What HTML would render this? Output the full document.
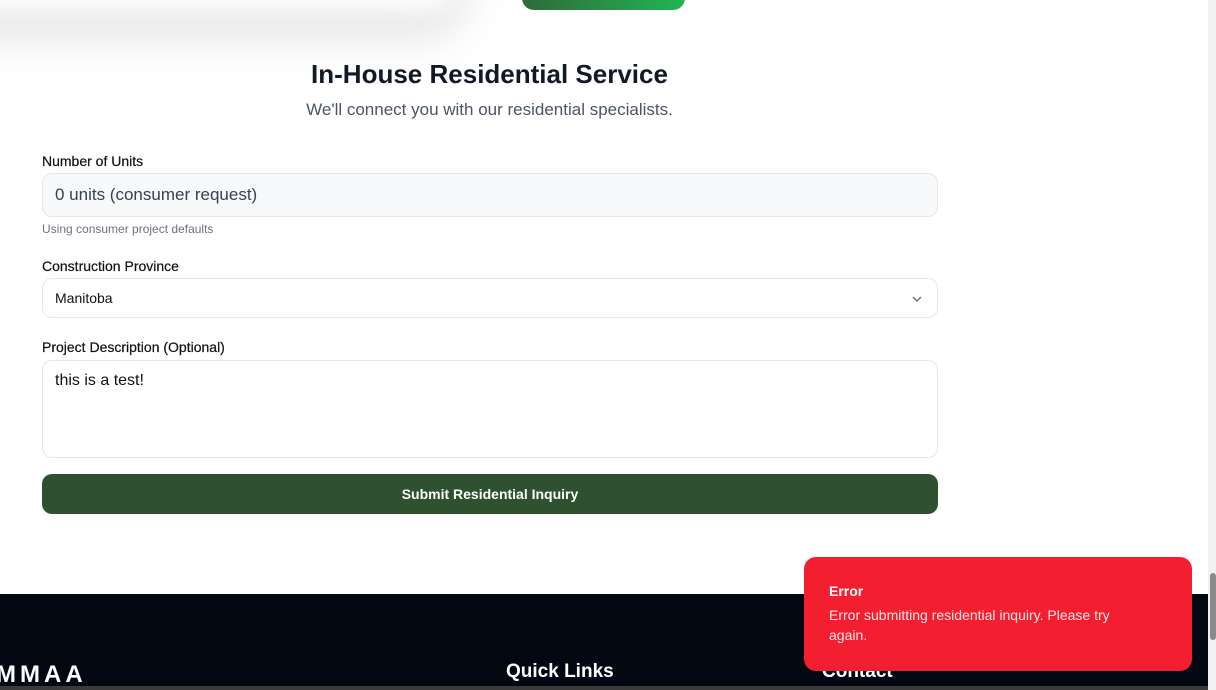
<!DOCTYPE html>
<html><head><style>
*{box-sizing:border-box;margin:0;padding:0}
body{width:1216px;height:690px;overflow:hidden;background:#fff;font-family:"Liberation Sans",sans-serif;position:relative;color:#111827}
.shadow{position:absolute;left:-100px;top:-80px;width:560px;height:90px;border-radius:40px;box-shadow:0 20px 40px 10px rgba(0,0,0,.10);background:#fff;filter:blur(10px)}
.gbtn{position:absolute;left:522px;top:-20px;width:163px;height:30px;border-radius:12px;background:linear-gradient(90deg,#2e6b3a,#22b455)}
h1{position:absolute;left:0;width:979px;top:59px;text-align:center;font-size:26px;font-weight:bold;color:#111827}
.sub{position:absolute;left:0;width:979px;top:100px;text-align:center;font-size:17px;color:#4b5563}
.lbl{position:absolute;left:42px;font-size:14px;color:#111;font-weight:500;-webkit-text-stroke:.2px #111}
.box{position:absolute;left:42px;width:896px;border:1px solid #e5e7eb;border-radius:10px;background:#fff;padding-left:12px;color:#111}
.btn{position:absolute;left:42px;top:474px;width:896px;height:40px;border-radius:10px;background:#2f5130;color:#fff;font-weight:bold;font-size:14px;text-align:center;line-height:40px}
.foot{position:absolute;left:0;top:594px;width:1208px;height:96px;background:#030712}
.bar{position:absolute;left:0;top:686px;width:1216px;height:4px;background:#3a3a3a}
.sb{position:absolute;left:1208px;top:0;width:8px;height:690px;background:#f1f1f1}
.thumb{position:absolute;left:1210px;top:573px;width:6px;height:67px;background:#8a8a8a;border-radius:3px}
.toast{position:absolute;left:804px;top:557px;width:388px;height:114px;background:#f31f31;border-radius:12px;color:#fff;padding:26px 50px 0 25px}
</style></head><body>
<div class="shadow"></div>
<div class="gbtn"></div>
<h1>In-House Residential Service</h1>
<div class="sub">We'll connect you with our residential specialists.</div>
<div class="lbl" style="top:153px">Number of Units</div>
<div class="box" style="top:173px;height:44px;background:#f8f9fb;line-height:42px;font-size:17px;color:#374151">0 units (consumer request)</div>
<div style="position:absolute;left:42px;top:222px;font-size:12px;color:#6b7280">Using consumer project defaults</div>
<div class="lbl" style="top:258px">Construction Province</div>
<div class="box" style="top:278px;height:40px;line-height:38px;font-size:14px">Manitoba
<svg style="position:absolute;right:14px;top:14px" width="12" height="12" viewBox="0 0 12 12"><path d="M2 4l4 4 4-4" fill="none" stroke="#6b7280" stroke-width="1.5"/></svg></div>
<div class="lbl" style="top:339px">Project Description (Optional)</div>
<div class="box" style="top:360px;height:98px;padding-top:11px;font-size:16px">this is a test!</div>
<div class="btn">Submit Residential Inquiry</div>
<div class="foot">
<div style="position:absolute;left:-4px;top:67px;color:#fff;font-weight:bold;font-size:24px;letter-spacing:4px">MMAA</div>
<div style="position:absolute;left:506px;top:67px;color:#fff;font-weight:bold;font-size:19px">Quick Links</div>
<div style="position:absolute;left:822px;top:67px;color:#fff;font-weight:bold;font-size:19px">Contact</div>
</div>
<div class="bar"></div>
<div class="sb"></div><div class="thumb"></div>
<div class="toast"><div style="font-weight:bold;font-size:14px">Error</div><div style="font-size:14px;margin-top:6px;line-height:20px;color:#ffe4e6">Error submitting residential inquiry. Please try again.</div></div>
</body></html>
